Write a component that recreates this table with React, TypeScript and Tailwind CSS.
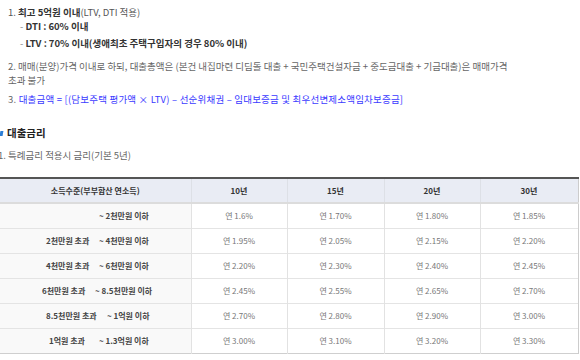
import React from "react";

const rows = [
  { pl: "pl-[99px]", lw: "", left: "", right: "~ 2천만원 이하", v: ["1.6%", "1.70%", "1.80%", "1.85%"] },
  { pl: "pl-[46px]", lw: "w-[53px]", left: "2천만원 초과", right: "~ 4천만원 이하", v: ["1.95%", "2.05%", "2.15%", "2.20%"] },
  { pl: "pl-[46px]", lw: "w-[53px]", left: "4천만원 초과", right: "~ 6천만원 이하", v: ["2.20%", "2.30%", "2.40%", "2.45%"] },
  { pl: "pl-[42px]", lw: "w-[53px]", left: "6천만원 초과", right: "~ 8.5천만원 이하", v: ["2.45%", "2.55%", "2.65%", "2.70%"] },
  { pl: "pl-[46px]", lw: "w-[61px]", left: "8.5천만원 초과", right: "~ 1억원 이하", v: ["2.70%", "2.80%", "2.90%", "3.00%"] },
  { pl: "pl-[49px]", lw: "w-[50px]", left: "1억원 초과", right: "~ 1.3억원 이하", v: ["3.00%", "3.10%", "3.20%", "3.30%"] },
];

export default function App() {
  return (
    <div
      className="w-[580px] h-[360px] overflow-hidden bg-white text-[#666]"
      style={{ fontFamily: '"Noto Sans CJK KR", "Noto Sans", sans-serif' }}
    >
      <div className="pl-[8px] pt-[5px] text-[9.5px] leading-[14px]">
        <div className="text-[#555]">
          1. <b className="font-bold text-[#333]">최고 5억원 이내</b>(LTV, DTI 적용)
        </div>
        <div className="pl-[12px] text-[#333] font-bold">
          <span className="font-normal text-[#888]">-</span> DTI : 60% 이내
        </div>
        <div className="pl-[12px] mt-[3px] text-[#333] font-bold">
          <span className="font-normal text-[#888]">-</span> LTV : 70% 이내(생애최초 주택구입자의 경우 80% 이내)
        </div>
        <div className="mt-[10px] leading-[13.5px] text-[#666] whitespace-nowrap">
          2. 매매(분양)가격 이내로 하되, 대출총액은 (본건 내집마련 디딤돌 대출 + 국민주택건설자금 + 중도금대출 + 기금대출)은 매매가격
          <br />
          초과 불가
        </div>
        <div className="mt-[5px] text-[#3b3bff] whitespace-nowrap tracking-[0.2px]">
          <span className="text-[#666]">3. </span>대출금액 = [(담보주택 평가액 × LTV) – 선순위채권 – 임대보증금 및 최우선변제소액임차보증금]
        </div>
      </div>

      <div className="mt-[20px] flex items-center h-[14px]">
        <span className="w-[3px] h-[5px] bg-[#2a7dd6] mr-[4px] skew-x-[-10deg]" />
        <span className="text-[10.5px] font-bold text-[#222]">대출금리</span>
      </div>
      <div className="mt-[8px] -ml-[2px] text-[9.5px] leading-[14px] text-[#666]">
        1. 특례금리 적용시 금리(기본 5년)
      </div>

      <table className="mt-[15px] w-[578px] table-fixed border-collapse text-[8px]">
        <colgroup>
          <col className="w-[191px]" />
          <col className="w-[96px]" />
          <col className="w-[97px]" />
          <col className="w-[96px]" />
          <col className="w-[98px]" />
        </colgroup>
        <thead>
          <tr className="h-[25px] bg-[#e9ecf4] border-t-2 border-t-[#555] border-b-2 border-b-[#dcdcdc]">
            {["소득수준(부부합산 연소득)", "10년", "15년", "20년", "30년"].map((h, i) => (
              <th
                key={h}
                className={`p-0 font-bold text-[#333] text-center border-r ${i === 4 ? "border-r-[#ccc]" : "border-r-[#dde0e6]"}`}
              >
                {h}
              </th>
            ))}
          </tr>
        </thead>
        <tbody>
          {rows.map((r, ri) => (
            <tr key={ri} className="h-[25px] border-b border-b-[#e4e4e4] last:border-b-[#cfcfcf]">
              <td className="p-0 bg-[#f9f9f9] border-r border-r-[#e2e2e2]">
                <div className={`flex font-bold text-[#444] whitespace-nowrap ${r.pl}`}>
                  {r.left && <span className={`inline-block ${r.lw}`}>{r.left}</span>}
                  <span>{r.right}</span>
                </div>
              </td>
              {r.v.map((v, vi) => (
                <td
                  key={vi}
                  className={`p-0 text-center text-[#777] border-r ${vi === 3 ? "border-r-[#ccc]" : "border-r-[#e2e2e2]"}`}
                >
                  연 {v}
                </td>
              ))}
            </tr>
          ))}
        </tbody>
      </table>
    </div>
  );
}
